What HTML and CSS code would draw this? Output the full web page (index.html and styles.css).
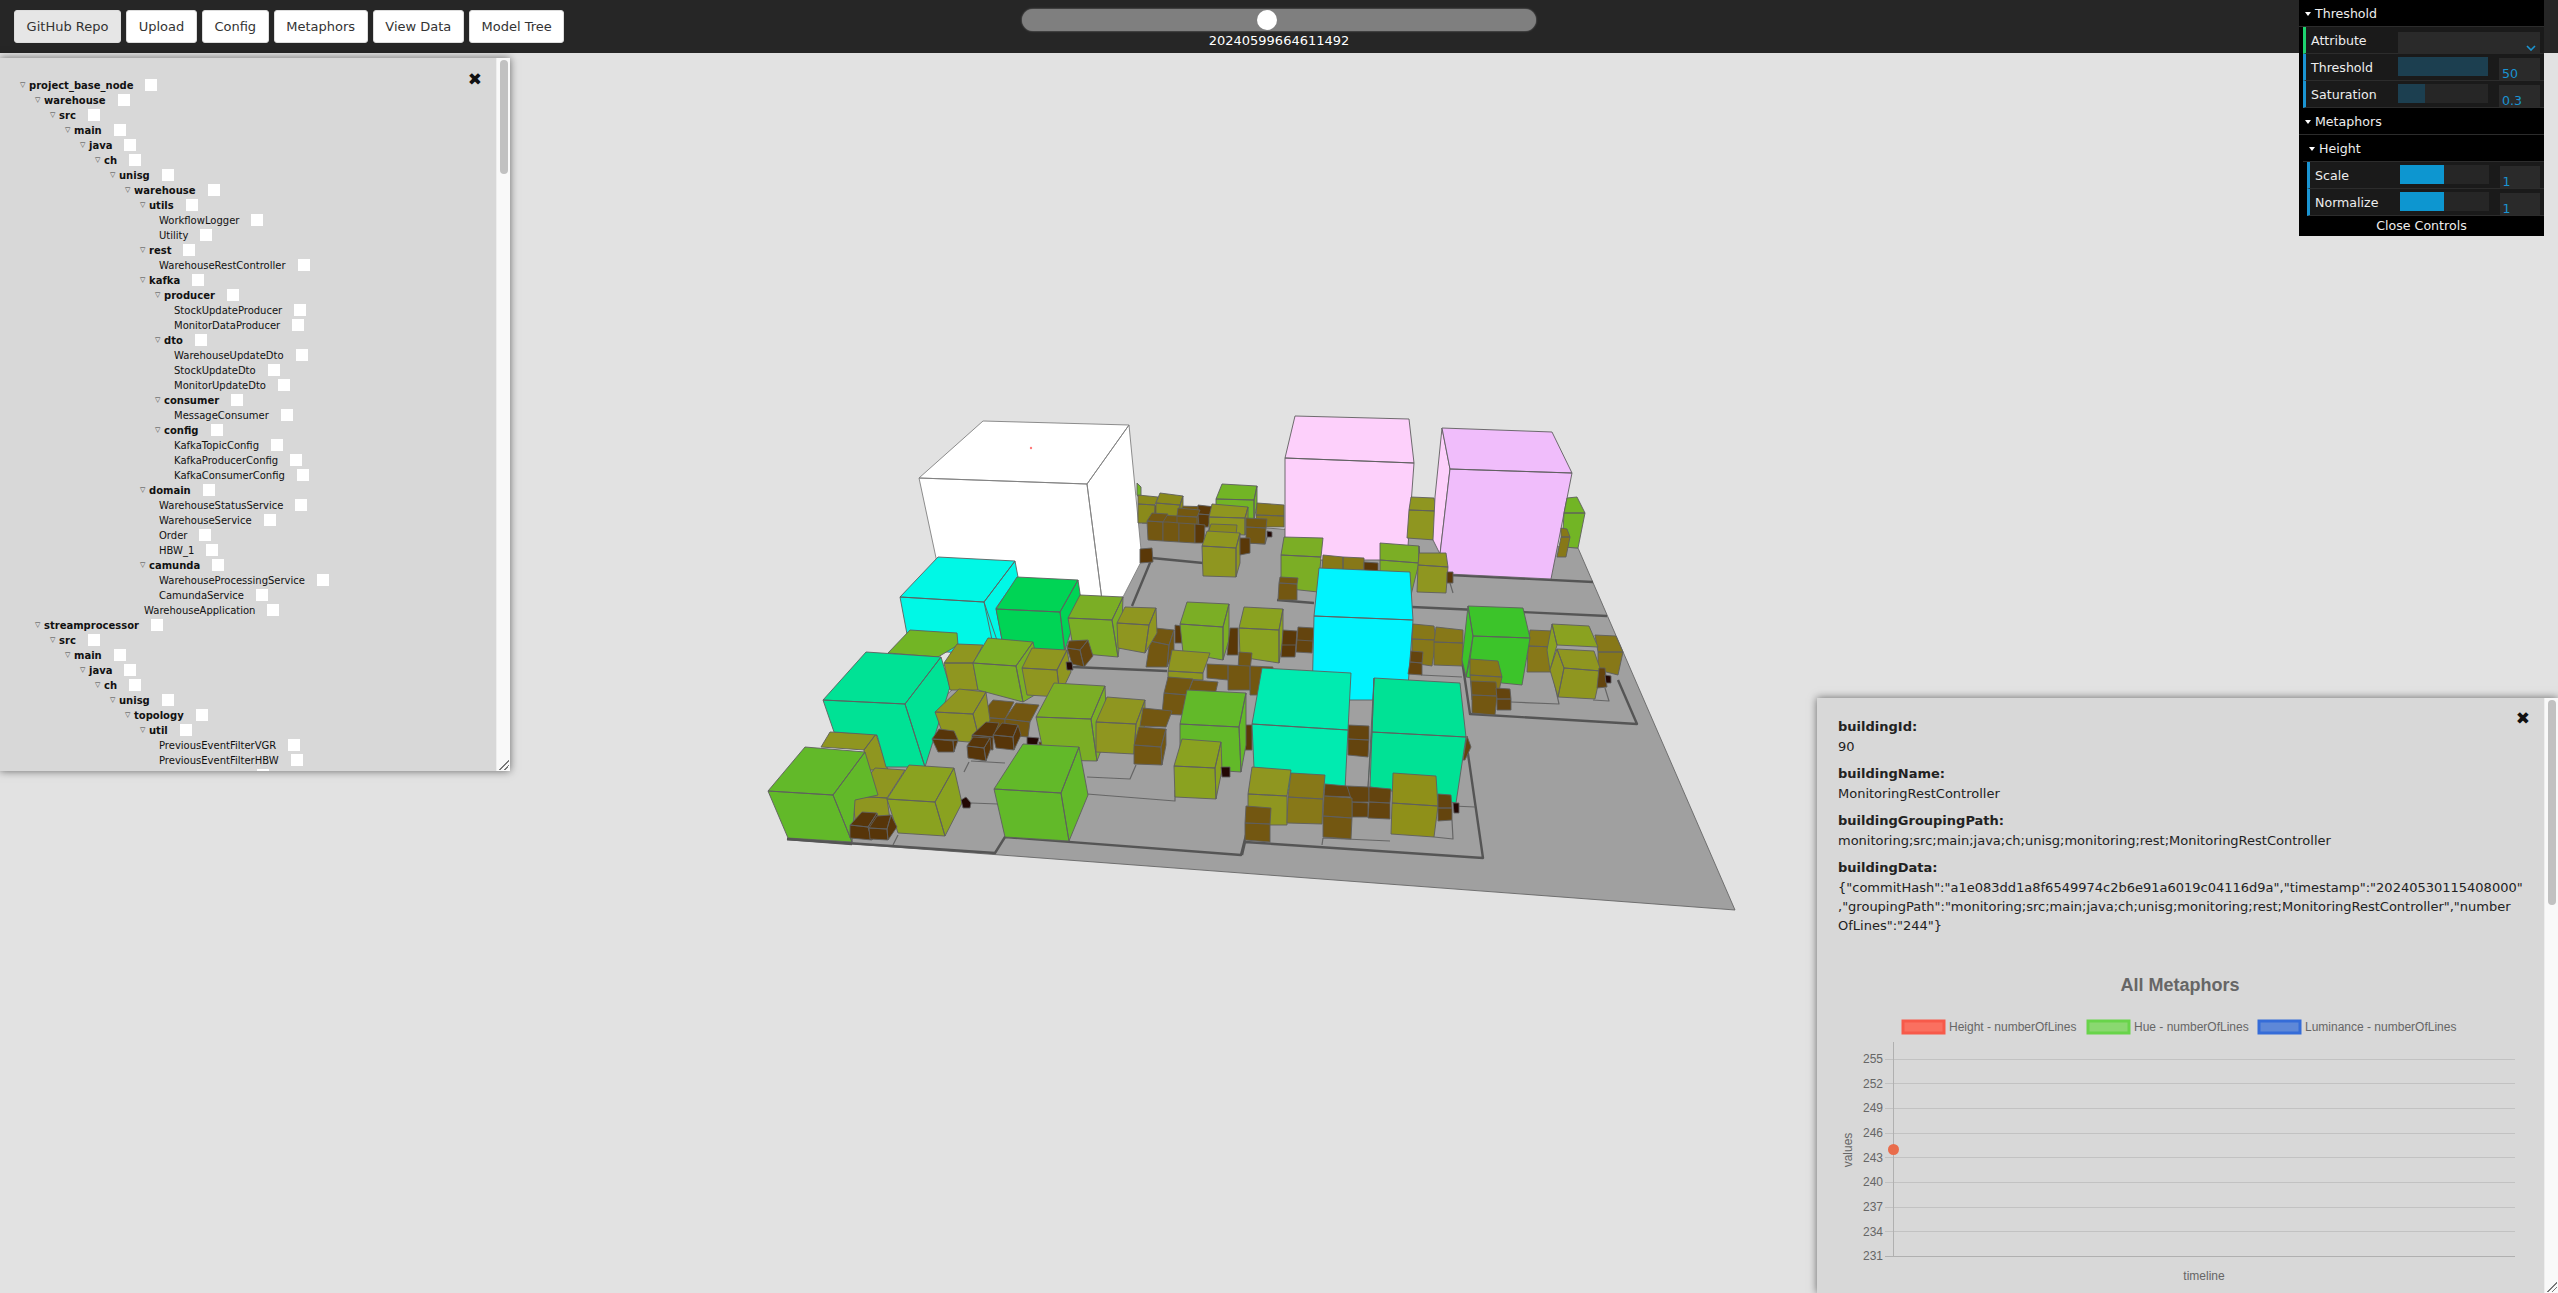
FILE: index.html
```html
<!DOCTYPE html>
<html lang="en">
<head>
<meta charset="utf-8">
<title>Metaphors</title>
<link rel="stylesheet" href="styles.css">
</head>
<body>
<header class="bar">
  <nav class="btns">
    <button class="btn btn-active">GitHub Repo</button>
    <button class="btn">Upload</button>
    <button class="btn">Config</button>
    <button class="btn">Metaphors</button>
    <button class="btn">View Data</button>
    <button class="btn">Model Tree</button>
  </nav>
  <div class="time">
    <div class="track"><span class="thumb"></span></div>
    <div class="stamp">20240599664611492</div>
  </div>
</header>

<main class="scene">
<svg class="city" width="2558" height="1240" viewBox="0 53 2558 1240" xmlns="http://www.w3.org/2000/svg">
  <path class="base" d="M787 839L1140 520L1578 548L1735 910Z"/>
  <g class="ln2">
    <path d="M787 839L995 853L1005 837L1241 855L1246 835"/>
    <path d="M1242 855L1245 842L1483 858L1466 740"/>
    <path d="M1462 660L1470 714L1637 724L1618 680"/>
    <path d="M1412 607L1607 616"/>
    <path d="M1072 667L1167 671"/>
    <path d="M1277 600L1314 603"/>
    <path d="M1132 606L1152 558L1203 563"/>
    <path d="M1450 575L1593 582"/>
  </g>
  <g class="ln1">
    <path d="M1087 777L1130 779L1136 765"/>
    <path d="M1087 794L1175 801L1175 790"/>
    <path d="M971 761L1005 763"/>
    <path d="M964 772L969 762"/>
    <path d="M893 845L898 835"/>
    <path d="M971 803L998 804"/>
    <path d="M1322 845L1323 838L1390 841"/>
    <path d="M1434 837L1453 839L1452 820"/>
    <path d="M1453 806L1475 807"/>
    <path d="M1511 702L1559 704L1552 672"/>
    <path d="M1593 700L1609 701L1605 688"/>
    <path d="M1421 675L1462 677"/>
    <path d="M1453 593L1450 583"/>
    <path d="M1246 543L1265 544L1267 537"/>
  </g>

  <path class="grn2" d="M1137 483L1141 487L1141 500L1137 495Z"/>
  <path class="white" d="M983 421L1129 425L1087 484L919 478ZM919 478L1087 484L1102 600L945 600ZM1087 484L1129 425L1142 560L1123 597L1102 600Z"/>
  <circle class="pin" cx="1031" cy="448" r="1.2"/>

  <path class="brn" d="M1142 505L1215 507L1215 525L1142 523Z"/>
  <path class="olv3" d="M1138 495L1158 497L1155 505L1138 504ZM1138 504L1155 505L1154 523L1138 523Z"/>
  <path class="olv3" d="M1160 493L1183 496L1180 505L1156 503ZM1156 503L1180 505L1179 516L1156 515ZM1180 505L1183 496L1183 506L1179 516Z"/>
  <path class="drk" d="M1198 505L1215 507L1212 515L1198 514ZM1198 514L1212 515L1208 527L1199 527Z"/>
  <path class="brn" d="M1178 508L1200 510L1197 517L1177 516ZM1177 516L1197 517L1197 526L1177 525Z"/>
  <path class="brn" d="M1152 513L1168 514L1163 522L1147 521ZM1147 521L1163 522L1163 541L1148 540Z"/>
  <path class="brn" d="M1168 522L1163 522L1163 541L1179 542L1179 523Z"/>
  <path class="brn" d="M1179 523L1195 524L1195 543L1179 542Z"/>
  <path class="drk" d="M1195 524L1205 525L1204 543L1195 543Z"/>
  <path class="grn2" d="M1222 484L1257 486L1254 500L1216 499ZM1216 499L1254 500L1254 520L1216 520ZM1254 500L1257 486L1257 505L1254 520Z"/>
  <path class="olv2" d="M1212 504L1248 507L1245 518L1209 517ZM1209 517L1245 518L1245 535L1209 533ZM1245 518L1248 507L1248 525L1245 535Z"/>
  <path class="olv3" d="M1211 524L1237 525L1236 535L1208 533Z"/>
  <path class="olv2" d="M1207 531L1240 533L1236 548L1202 546ZM1202 546L1236 548L1236 577L1203 576ZM1236 548L1240 533L1240 563L1236 577Z"/>
  <path class="olv4" d="M1257 503L1284 505L1284 516L1256 515ZM1256 515L1284 516L1284 527L1256 527Z"/>
  <path class="brn" d="M1246 518L1267 519L1266 528L1246 527ZM1246 527L1266 528L1265 544L1246 543Z"/>
  <path class="drk" d="M1240 538L1250 538L1250 553L1240 555Z"/>
  <path class="blk" d="M1267 531L1272 532L1272 537L1267 537Z"/>
  <path class="drk" d="M1140 549L1152 548L1153 562L1140 563Z"/>

  <path class="pink" d="M1295 416L1409 419L1414 463L1285 458ZM1285 458L1414 463L1407 560L1285 560Z"/>
  <path class="olv2" d="M1411 497L1434 498L1436 511L1409 510ZM1409 510L1436 511L1435 540L1407 538Z"/>
  <path class="pink" d="M1442 428L1450 469L1440 554L1433 540L1435 497Z"/>
  <path class="lilac" d="M1442 428L1552 432L1572 473L1450 469ZM1450 469L1572 473L1551 579L1448 574L1440 554Z"/>
  <path class="grn2" d="M1567 498L1577 497L1585 513L1564 513ZM1564 513L1585 513L1578 548L1562 547Z"/>
  <path class="olv4" d="M1561 528L1567 529L1570 537L1561 537ZM1561 537L1570 537L1566 557L1557 557Z"/>

  <path class="aqua" d="M938 557L1015 561L984 602L900 597ZM900 597L984 602L1002 655L910 650ZM984 602L1015 561L1018 577L996 608L1002 640L992 640Z"/>
  <path class="lime" d="M1017 577L1078 580L1060 612L996 609ZM996 609L1060 612L1065 655L1005 655ZM1060 612L1078 580L1081 600L1065 650Z"/>
  <path class="grn" d="M1080 595L1123 597L1112 620L1068 618ZM1068 618L1112 620L1118 657L1074 653ZM1112 620L1123 597L1122 625L1118 657Z"/>
  <path class="drk" d="M1175 625L1182 626L1182 643L1175 643Z"/>
  <path class="brn" d="M1155 628L1174 630L1169 645L1150 641ZM1150 641L1169 645L1167 667L1146 667ZM1169 645L1174 630L1174 650L1167 667Z"/>
  <path class="olv2" d="M1125 607L1156 608L1149 625L1117 623ZM1117 623L1149 625L1145 653L1118 648ZM1149 625L1156 608L1157 633L1145 653Z"/>
  <path class="grn" d="M1187 602L1229 604L1223 627L1180 624ZM1180 624L1223 627L1223 660L1183 653ZM1223 627L1229 604L1229 640L1223 660Z"/>
  <path class="drk" d="M1230 628L1238 628L1238 655L1227 655Z"/>
  <path class="olv" d="M1244 607L1283 609L1279 630L1239 628ZM1239 628L1279 630L1279 663L1240 657ZM1279 630L1283 609L1283 640L1279 663Z"/>
  <path class="grn" d="M1284 537L1323 538L1321 557L1281 555ZM1281 555L1321 557L1318 592L1281 588Z"/>
  <path class="brn" d="M1280 577L1298 578L1297 584L1279 583ZM1279 583L1297 584L1297 600L1278 600Z"/>
  <path class="olv4" d="M1323 555L1343 557L1343 570L1322 570ZM1343 557L1364 558L1364 570L1343 570Z"/>
  <path class="drk" d="M1364 562L1378 563L1378 575L1364 575Z"/>
  <path class="grn" d="M1380 543L1419 546L1419 563L1380 560ZM1380 560L1419 563L1411 595L1380 590ZM1419 546L1421 575L1419 563Z"/>
  <path class="olv2" d="M1419 553L1446 553L1448 567L1418 565ZM1418 565L1448 567L1446 593L1417 592Z"/>
  <path class="drk" d="M1447 572L1453 572L1453 583L1447 583Z"/>
  <path class="drk" d="M1283 630L1297 631L1295 657L1281 657ZM1282 645L1296 645"/>
  <path class="brn2" d="M1298 627L1314 628L1312 653L1296 652ZM1297 640L1313 641"/>
  <path class="aqua2" d="M1319 568L1410 572L1413 620L1314 616ZM1314 616L1413 620L1407 700L1312 700Z"/>

  <path class="grn2" d="M910 630L957 633L958 645L938 657L888 653Z"/>
  <path class="olv2" d="M830 732L876 734L864 750L821 747ZM876 734L888 770L864 770L864 750Z"/>
  <path class="teal2" d="M866 652L941 657L905 704L823 700ZM823 700L905 704L925 767L886 767L877 735L834 732ZM905 704L941 657L950 687L925 767Z"/>
  <path class="olv2" d="M957 644L983 645L973 663L944 663ZM944 663L973 663L978 690L950 690Z"/>
  <path class="grn" d="M988 638L1033 642L1016 666L973 663ZM973 663L1016 666L1023 702L978 690ZM1016 666L1033 642L1043 690L1023 702Z"/>
  <path class="olv2" d="M1032 648L1067 650L1057 670L1022 668ZM1022 668L1057 670L1060 697L1027 695ZM1057 670L1067 650L1071 672L1060 695Z"/>
  <path class="brn2" d="M1069 641L1088 640L1080 650L1067 648ZM1067 648L1080 650L1084 667L1072 664ZM1080 650L1088 640L1093 656L1084 667Z"/>
  <path class="blk" d="M1066 662L1072 662L1073 670L1067 670Z"/>

  <path class="brn" d="M1239 652L1252 653L1250 670L1238 670Z"/>
  <path class="olv2" d="M1172 650L1210 653L1203 673L1168 671ZM1168 671L1203 673L1203 680L1168 678Z"/>
  <path class="brn" d="M1207 664L1228 665L1228 680L1207 678ZM1228 665L1250 666L1250 690L1228 690ZM1250 666L1273 667L1270 695L1250 695Z"/>
  <path class="brn" d="M1193 680L1218 682L1215 695L1187 695ZM1187 695L1215 695L1211 715L1183 715Z"/>
  <path class="brn" d="M1168 677L1193 679L1187 695L1164 693ZM1164 693L1187 695L1182 715L1162 714Z"/>
  <path class="olv4" d="M1413 624L1434 626L1436 640L1412 639ZM1412 639L1436 640L1432 666L1412 663Z"/>
  <path class="olv4" d="M1436 627L1463 630L1463 643L1434 642ZM1434 642L1463 643L1462 666L1434 665Z"/>
  <path class="brn2" d="M1411 651L1423 652L1422 663L1410 662ZM1410 662L1422 663L1422 675L1408 674Z"/>
  <path class="olv4" d="M1530 630L1553 631L1555 647L1528 646ZM1528 646L1555 647L1552 672L1527 672Z"/>
  <path class="lime2" d="M1468 606L1523 608L1530 638L1473 636ZM1473 636L1530 638L1522 685L1502 683L1466 677ZM1468 606L1473 636L1470 660L1466 677L1462 660Z"/>
  <path class="olv4" d="M1470 659L1498 661L1502 677L1470 675ZM1470 675L1502 677L1497 700L1472 700Z"/>
  <path class="brn" d="M1471 681L1496 682L1497 696L1472 695ZM1472 695L1497 696L1495 715L1472 713Z"/>
  <path class="brn2" d="M1496 688L1510 689L1511 699L1497 699ZM1497 699L1511 699L1511 710L1497 710Z"/>
  <path class="olv4" d="M1595 635L1616 636L1623 652L1598 652ZM1598 652L1623 652L1618 675L1598 670Z"/>
  <path class="olv" d="M1552 624L1589 626L1598 647L1557 645ZM1552 624L1557 645L1550 670L1547 650Z"/>
  <path class="olv2" d="M1557 649L1594 651L1601 671L1564 668ZM1564 668L1601 671L1595 699L1558 697ZM1557 649L1564 668L1558 697L1550 670Z"/>
  <path class="brn2" d="M1599 668L1605 668L1607 687L1597 688Z"/>
  <path class="blk" d="M1605 675L1611 676L1611 683L1606 683Z"/>

  <path class="brn" d="M993 700L1014 702L1005 719L979 717ZM979 717L1005 719L1005 735L975 733Z"/>
  <path class="brn" d="M1016 703L1039 705L1030 722L1005 719ZM1005 719L1030 722L1028 737L1005 735Z"/>
  <path class="olv2" d="M959 689L986 692L973 714L935 712ZM935 712L973 714L980 743L945 740ZM973 714L986 692L990 720L980 742Z"/>
  <path class="drk2" d="M939 729L954 731L958 740L932 739ZM932 739L953 741L954 752L938 752ZM953 741L958 740L954 752Z"/>
  <path class="drk2" d="M986 722L999 723L993 737L972 735ZM972 735L993 737L993 750L972 747Z"/>
  <path class="drk2" d="M1002 723L1018 725L1013 737L993 735ZM993 735L1013 737L1014 750L996 748ZM1013 737L1018 725L1021 735L1014 750Z"/>
  <path class="drk2" d="M973 737L990 738L984 748L967 746ZM967 746L984 748L986 761L968 758ZM984 748L990 738L991 748L986 761Z"/>
  <path class="blk" d="M1027 737L1039 738L1037 745L1027 745Z"/>
  <path class="brn2" d="M1039 742L1063 744L1063 760L1039 760Z"/>
  <path class="grn" d="M1054 683L1105 686L1091 719L1036 717ZM1036 717L1091 719L1097 761L1045 760ZM1091 719L1105 686L1107 735L1097 761Z"/>
  <path class="olv2" d="M1107 697L1145 700L1136 724L1096 722ZM1096 722L1136 724L1134 754L1096 752ZM1136 724L1145 700L1145 725L1134 754Z"/>
  <path class="brn" d="M1143 708L1172 711L1166 727L1140 726Z"/>
  <path class="brn" d="M1139 727L1166 729L1161 747L1134 745ZM1134 745L1161 747L1162 765L1134 764ZM1161 747L1166 729L1166 745L1162 765Z"/>
  <path class="drk" d="M1245 725L1252 725L1252 750L1245 750Z"/>
  <path class="grn3" d="M1187 690L1246 693L1239 727L1180 724ZM1180 724L1239 727L1241 772L1180 768ZM1239 727L1246 693L1246 745L1241 772Z"/>
  <path class="olv" d="M1182 739L1221 742L1215 768L1174 766ZM1174 766L1215 768L1216 799L1175 797ZM1215 768L1221 742L1222 770L1216 799Z"/>
  <path class="blk" d="M1221 767L1230 767L1230 777L1222 777Z"/>

  <path class="brn2" d="M1348 725L1369 726L1369 740L1348 739ZM1348 739L1369 740L1368 757L1348 755Z"/>
  <path class="teal" d="M1262 668L1351 673L1348 730L1252 724ZM1252 724L1348 730L1345 790L1255 790Z"/>
  <path class="brn2" d="M1467 736L1471 747L1465 760L1463 760Z"/>
  <path class="teal2" d="M1374 678L1460 683L1466 737L1372 732ZM1372 732L1466 737L1456 803L1370 787ZM1374 678L1372 732L1368 787Z"/>
  <path class="grn3" d="M1023 744L1079 747L1061 793L994 789ZM994 789L1061 793L1069 841L1005 837ZM1061 793L1079 747L1088 795L1069 841Z"/>

  <path class="brn2" d="M1325 784L1347 786L1352 797L1324 796Z"/>
  <path class="brn2" d="M1347 786L1369 787L1369 802L1352 802ZM1352 802L1368 803L1368 817L1352 817Z"/>
  <path class="brn2" d="M1369 787L1391 789L1390 803L1369 802ZM1369 802L1390 803L1390 819L1368 818Z"/>
  <path class="olv2" d="M1252 767L1291 770L1287 796L1248 794ZM1248 794L1287 796L1287 825L1248 825Z"/>
  <path class="olv4" d="M1291 773L1325 775L1323 799L1288 797ZM1288 797L1323 799L1322 824L1287 823Z"/>
  <path class="brn" d="M1246 806L1271 808L1270 824L1245 823ZM1245 823L1270 824L1270 842L1245 840Z"/>
  <path class="brn" d="M1324 796L1352 798L1352 818L1323 816ZM1323 816L1352 818L1351 839L1323 837Z"/>
  <path class="olv5" d="M1393 773L1436 776L1438 806L1392 803ZM1392 803L1438 806L1434 837L1391 834Z"/>
  <path class="brn2" d="M1438 794L1451 795L1452 808L1438 808ZM1438 808L1452 808L1452 820L1438 821Z"/>
  <path class="blk" d="M1453 803L1459 803L1459 813L1454 813Z"/>

  <path class="olv2" d="M875 768L905 770L887 798L853 796ZM853 796L887 798L890 820L855 820Z"/>
  <path class="olv" d="M909 765L954 768L935 802L887 799ZM887 799L935 802L945 836L898 833ZM935 802L954 768L962 803L945 836Z"/>
  <path class="grn3" d="M805 747L865 752L833 795L768 791ZM768 791L833 795L852 842L788 838ZM833 795L865 752L878 795L855 800L852 842Z"/>
  <path class="drk2" d="M862 812L877 813L868 827L850 825ZM850 825L868 827L872 840L850 838ZM868 827L877 813L880 826L872 840Z"/>
  <path class="drk2" d="M877 816L891 815L887 829L869 828ZM869 828L887 829L888 840L870 839ZM887 829L891 815L897 827L888 840Z"/>
  <path class="blk" d="M961 800L966 797L971 803L970 808L963 808Z"/>
  <g class="ln2"><path d="M787 839L852 844"/></g>
</svg>
</main>

<aside class="panel tree-panel">
  <span class="close">✖</span>
  <ul class="tree">
    <li><div class="row"><b>project_base_node</b></div>
      <ul>
        <li><div class="row"><b>warehouse</b></div>
          <ul><li><div class="row"><b>src</b></div>
            <ul><li><div class="row"><b>main</b></div>
              <ul><li><div class="row"><b>java</b></div>
                <ul><li><div class="row"><b>ch</b></div>
                  <ul><li><div class="row"><b>unisg</b></div>
                    <ul><li><div class="row"><b>warehouse</b></div>
                      <ul>
                        <li><div class="row"><b>utils</b></div>
                          <ul>
                            <li><div class="row leaf"><span>WorkflowLogger</span></div></li>
                            <li><div class="row leaf"><span>Utility</span></div></li>
                          </ul>
                        </li>
                        <li><div class="row"><b>rest</b></div>
                          <ul><li><div class="row leaf"><span>WarehouseRestController</span></div></li></ul>
                        </li>
                        <li><div class="row"><b>kafka</b></div>
                          <ul>
                            <li><div class="row"><b>producer</b></div>
                              <ul>
                                <li><div class="row leaf"><span>StockUpdateProducer</span></div></li>
                                <li><div class="row leaf"><span>MonitorDataProducer</span></div></li>
                              </ul>
                            </li>
                            <li><div class="row"><b>dto</b></div>
                              <ul>
                                <li><div class="row leaf"><span>WarehouseUpdateDto</span></div></li>
                                <li><div class="row leaf"><span>StockUpdateDto</span></div></li>
                                <li><div class="row leaf"><span>MonitorUpdateDto</span></div></li>
                              </ul>
                            </li>
                            <li><div class="row"><b>consumer</b></div>
                              <ul><li><div class="row leaf"><span>MessageConsumer</span></div></li></ul>
                            </li>
                            <li><div class="row"><b>config</b></div>
                              <ul>
                                <li><div class="row leaf"><span>KafkaTopicConfig</span></div></li>
                                <li><div class="row leaf"><span>KafkaProducerConfig</span></div></li>
                                <li><div class="row leaf"><span>KafkaConsumerConfig</span></div></li>
                              </ul>
                            </li>
                          </ul>
                        </li>
                        <li><div class="row"><b>domain</b></div>
                          <ul>
                            <li><div class="row leaf"><span>WarehouseStatusService</span></div></li>
                            <li><div class="row leaf"><span>WarehouseService</span></div></li>
                            <li><div class="row leaf"><span>Order</span></div></li>
                            <li><div class="row leaf"><span>HBW_1</span></div></li>
                          </ul>
                        </li>
                        <li><div class="row"><b>camunda</b></div>
                          <ul>
                            <li><div class="row leaf"><span>WarehouseProcessingService</span></div></li>
                            <li><div class="row leaf"><span>CamundaService</span></div></li>
                          </ul>
                        </li>
                        <li><div class="row leaf"><span>WarehouseApplication</span></div></li>
                      </ul>
                    </li></ul>
                  </li></ul>
                </li></ul>
              </li></ul>
            </li></ul>
          </li></ul>
        </li>
        <li><div class="row"><b>streamprocessor</b></div>
          <ul><li><div class="row"><b>src</b></div>
            <ul><li><div class="row"><b>main</b></div>
              <ul><li><div class="row"><b>java</b></div>
                <ul><li><div class="row"><b>ch</b></div>
                  <ul><li><div class="row"><b>unisg</b></div>
                    <ul><li><div class="row"><b>topology</b></div>
                      <ul>
                        <li><div class="row"><b>util</b></div>
                          <ul>
                            <li><div class="row leaf"><span>PreviousEventFilterVGR</span></div></li>
                            <li><div class="row leaf"><span>PreviousEventFilterHBW</span></div></li>
                            <li><div class="row leaf"><span class="unseen"></span></div></li>
                          </ul>
                        </li>
                      </ul>
                    </li></ul>
                  </li></ul>
                </li></ul>
              </li></ul>
            </li></ul>
          </li></ul>
        </li>
      </ul>
    </li>
  </ul>
  <div class="sbar"><span class="sthumb tree-thumb"></span></div>
  <span class="grip"></span>
</aside>

<aside class="gui">
  <div class="g-head">Threshold</div>
  <div class="g-row g-str"><label>Attribute</label><div class="g-select"><svg class="chev" width="10" height="6" viewBox="0 0 10 6"><path d="M1 1L5 5L9 1"/></svg></div></div>
  <div class="g-row"><label>Threshold</label><div class="g-slider"><span class="g-fill dim fill-100"></span></div><div class="g-num">50</div></div>
  <div class="g-row"><label>Saturation</label><div class="g-slider"><span class="g-fill dim fill-30"></span></div><div class="g-num">0.3</div></div>
  <div class="g-head">Metaphors</div>
  <div class="g-nest">
    <div class="g-head">Height</div>
    <div class="g-row"><label>Scale</label><div class="g-slider"><span class="g-fill fill-50"></span></div><div class="g-num">1</div></div>
    <div class="g-row"><label>Normalize</label><div class="g-slider"><span class="g-fill fill-50"></span></div><div class="g-num">1</div></div>
  </div>
  <div class="g-close">Close Controls</div>
</aside>

<aside class="panel info-panel">
  <span class="close">✖</span>
  <div class="info">
    <h4>buildingId:</h4><p>90</p>
    <h4>buildingName:</h4><p>MonitoringRestController</p>
    <h4>buildingGroupingPath:</h4><p>monitoring;src;main;java;ch;unisg;monitoring;rest;MonitoringRestController</p>
    <h4>buildingData:</h4>
    <p class="json">{"commitHash":"a1e083dd1a8f6549974c2b6e91a6019c04116d9a","timestamp":"20240530115408000"<br>,"groupingPath":"monitoring;src;main;java;ch;unisg;monitoring;rest;MonitoringRestController","number<br>OfLines":"244"}</p>
  </div>
  <svg class="chart" width="727" height="325" viewBox="1817 968 727 325" xmlns="http://www.w3.org/2000/svg">
    <text class="c-title" x="2180" y="991">All Metaphors</text>
    <rect class="lg-r" x="1903" y="1021" width="41" height="12"/>
    <text class="c-txt" x="1949" y="1031">Height - numberOfLines</text>
    <rect class="lg-g" x="2088" y="1021" width="41" height="12"/>
    <text class="c-txt" x="2134" y="1031">Hue - numberOfLines</text>
    <rect class="lg-b" x="2259" y="1021" width="41" height="12"/>
    <text class="c-txt" x="2305" y="1031">Luminance - numberOfLines</text>
    <g class="grid">
      <path d="M1885 1059.5H2515M1885 1083.5H2515M1885 1108.5H2515M1885 1133.5H2515M1885 1157.5H2515M1885 1182.5H2515M1885 1207.5H2515M1885 1231.5H2515"/>
      <path class="axis" d="M1885 1256.5H2515M1893.5 1042V1256"/>
    </g>
    <g class="c-tick">
      <text x="1883" y="1063">255</text><text x="1883" y="1088">252</text><text x="1883" y="1112">249</text>
      <text x="1883" y="1137">246</text><text x="1883" y="1162">243</text><text x="1883" y="1186">240</text>
      <text x="1883" y="1211">237</text><text x="1883" y="1236">234</text><text x="1883" y="1260">231</text>
    </g>
    <text class="c-txt c-mid" transform="rotate(-90 1852 1150)" x="1852" y="1150">values</text>
    <text class="c-txt c-mid" x="2204" y="1280">timeline</text>
    <circle class="dot" cx="1893.5" cy="1149.5" r="5.5"/>
  </svg>
  <div class="sbar"><span class="sthumb info-thumb"></span></div>
  <span class="grip"></span>
</aside>
</body>
</html>
```

FILE: styles.css
```css
* { box-sizing: border-box; }
html, body { margin: 0; height: 100%; }
body {
  background: #e2e2e2;
  font-family: "DejaVu Sans", sans-serif;
  overflow: hidden;
  position: relative;
}

/* top bar */
.bar {
  height: 53px;
  background: #262626;
  display: grid;
  grid-template-columns: 1fr auto 1fr;
  padding: 10px 14px 0;
}
.btns { display: flex; gap: 5px; height: 33px; }
.btn {
  font-family: "DejaVu Sans", sans-serif;
  font-size: 13px;
  color: #333;
  background: #fff;
  border: 1px solid #ddd;
  border-radius: 3px;
  padding: 0 11.6px;
  height: 33px;
}
.btn-active { background: #e6e6e6; }
.time { width: 514px; margin: -1px 0 0; display: flex; flex-direction: column; align-items: center; }
.track {
  width: 100%;
  height: 22px;
  border-radius: 11px;
  background: #7f7f7f;
  box-shadow: 0 0 2px #888;
  padding-left: 235px;
}
.thumb { display: block; width: 20px; height: 20px; margin-top: 1px; border-radius: 50%; background: #fff; }
.stamp { color: #fff; font-size: 13px; line-height: 16px; margin-top: 2px; }

/* scene */
.scene { height: 1240px; }
.city { display: block; }
.city path { stroke: #5f5f5f; stroke-width: .9; stroke-linejoin: round; }
.city .base { fill: #a0a0a0; stroke: #666; }
.city .ln2 path { fill: none; stroke: #555; stroke-width: 2.4; }
.city .ln1 path { fill: none; stroke: #666; stroke-width: 1.2; }
.city .white { fill: #fff; stroke: #808080; }
.pin { fill: #ff7a7a; }
.pink { fill: #fdd0fb; }
.lilac { fill: #f0bdfb; }
.aqua { fill: #00f8e6; }
.aqua2 { fill: #00f4ff; }
.teal { fill: #00ebb0; }
.teal2 { fill: #00e295; }
.lime { fill: #00d455; }
.lime2 { fill: #3cc42a; }
.grn { fill: #7bae25; }
.grn2 { fill: #72b525; }
.grn3 { fill: #62b929; }
.olv { fill: #8aa220; }
.olv2 { fill: #8f9620; }
.olv3 { fill: #8a8a1a; }
.olv4 { fill: #877818; }
.olv5 { fill: #8f9019; }
.brn { fill: #735711; }
.brn2 { fill: #64440e; }
.drk { fill: #5a3808; }
.drk2 { fill: #573509; }
.blk { fill: #220804; }

/* floating panels */
.panel {
  position: absolute;
  background: #d8d8d8;
  box-shadow: 0 0 8px rgba(0, 0, 0, .55);
  overflow: hidden;
}
.tree-panel { left: 0; top: 58px; width: 510px; height: 713px; padding: 20px 0 0 14px; }
.info-panel { left: 1817px; top: 698px; width: 741px; height: 595px; }
.close { position: absolute; top: 11px; font-size: 17px; line-height: 20px; color: #111; }
.tree-panel .close { right: 28px; }
.info-panel .close { right: 28px; top: 10px; }
.sbar { position: absolute; right: 0; top: 0; bottom: 0; width: 14px; background: #f9f9f9; border-left: 1px solid #eee; }
.sthumb { display: block; width: 8px; margin: 2px 0 0 3px; border-radius: 4px; background: #c1c1c1; }
.tree-thumb { height: 114px; }
.info-thumb { height: 205px; }
.grip {
  position: absolute; right: 1px; bottom: 1px; width: 10px; height: 10px;
  background: linear-gradient(135deg, transparent 48%, #777 48%, #777 56%, transparent 56%, transparent 72%, #777 72%, #777 80%, transparent 80%);
}

/* tree */
.tree, .tree ul { list-style: none; margin: 0; padding: 0; }
.tree ul { padding-left: 15px; }
.row {
  height: 15px;
  display: flex;
  align-items: center;
  font-size: 10px;
  line-height: 15px;
  color: #111;
  white-space: nowrap;
  gap: 12px;
}
.row b { font-weight: 700; position: relative; margin-left: 15px; }
.row b::before {
  content: "▽";
  position: absolute;
  left: -9px;
  top: 0;
  font-size: 7px;
  font-weight: 400;
  color: #444;
}
.row::after { content: ""; width: 12px; height: 12px; background: #fff; margin-top: -2px; }
.leaf { padding-left: 10px; }
.unseen { display: block; width: 86px; }

/* controls */
.gui {
  position: absolute;
  left: 2299px;
  top: 0;
  width: 245px;
  background: #000;
  color: #eee;
  font-size: 12.6px;
}
.g-head {
  height: 27px;
  line-height: 27px;
  padding-left: 16px;
  background: #000;
  border-bottom: 1px solid #2c2c2c;
  position: relative;
}
.g-head::before {
  content: "";
  position: absolute;
  left: 6px;
  top: 12px;
  border: 3px solid transparent;
  border-top: 4px solid #fff;
  border-bottom: 0;
}
.g-nest { margin-left: 4px; }
.g-row {
  height: 27px;
  margin-left: 4px;
  display: flex;
  align-items: center;
  background: #1a1a1a;
  border-left: 3px solid #1a94d2;
  border-bottom: 1px solid #2c2c2c;
  padding: 4px 4px 0 5px;
}
.g-nest .g-row { margin-left: 4px; }
.g-str { border-left-color: #1ed36f; }
.g-row label { width: 87px; flex: none; margin-top: -3px; }
.g-nest .g-row label { width: 85px; }
.g-select { width: 142px; height: 22px; background: #2a2a2a; position: relative; margin-top: 1px; }
.chev { position: absolute; right: 4px; bottom: 3px; }
.chev path { fill: none; stroke: #1a94d2; stroke-width: 1.6; }
.g-slider { width: 90px; height: 19px; background: #262626; margin-top: -5px; }
.g-num {
  width: 41px;
  height: 22px;
  margin-left: 11px;
  padding: 9px 0 0 3px;
  background: #2a2a2a;
  color: #1a94d2;
  font-size: 12.6px;
  line-height: 14px;
  overflow: hidden;
}
.g-fill { display: block; height: 100%; background: #0d96d0; }
.dim { background: #1c3f50; }
.fill-100 { width: 100%; }
.fill-50 { width: 50%; }
.fill-30 { width: 30%; }
.g-close { height: 20px; line-height: 20px; text-align: center; color: #eee; font-size: 12.6px; }

/* info */
.info { padding: 19px 0 0 21px; color: #222; font-size: 13px; }
.info h4 { margin: 0; font-size: 13px; line-height: 20px; font-weight: 700; }
.info p { margin: 0 0 8px; line-height: 19px; white-space: nowrap; }
.chart { position: absolute; left: 0; top: 270px; font-family: "Liberation Sans", sans-serif; }
.chart text { fill: #666; font-size: 12px; }
.chart .c-title { font-size: 18px; font-weight: 700; text-anchor: middle; }
.c-tick text { text-anchor: end; }
.chart .c-mid { text-anchor: middle; }
.grid path { stroke: #c2c2c2; fill: none; }
.grid .axis { stroke: #b0b0b0; }
.lg-r { fill: #fa7060; stroke: #f75a4a; stroke-width: 3; }
.lg-g { fill: #8ad870; stroke: #68d44a; stroke-width: 3; }
.lg-b { fill: #5e88d8; stroke: #356cd8; stroke-width: 3; }
.dot { fill: #e96c4b; }
```
